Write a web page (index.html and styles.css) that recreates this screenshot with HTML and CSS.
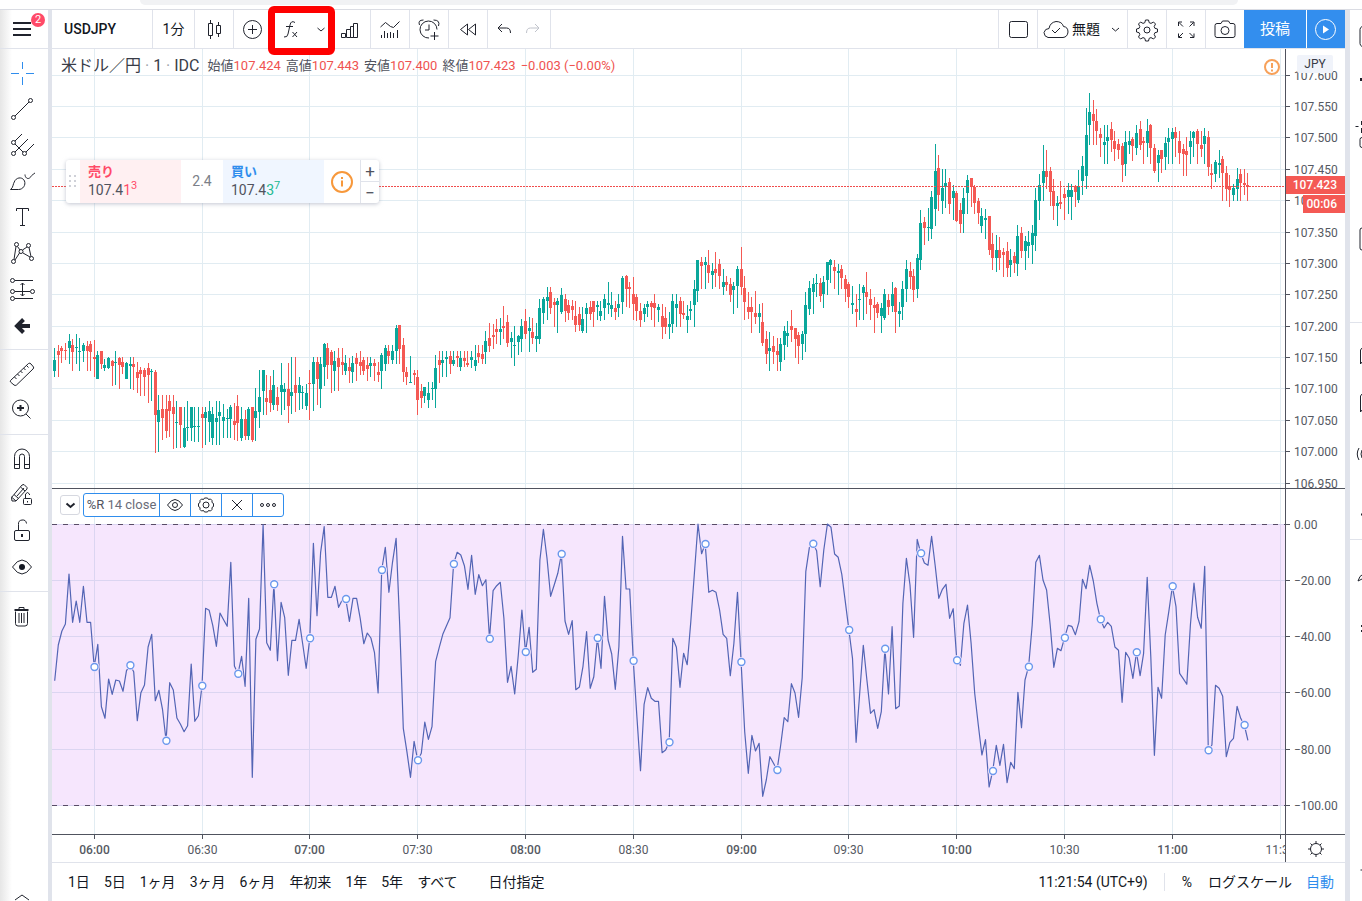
FILE: index.html
```html
<!DOCTYPE html>
<html lang="ja">
<head>
<meta charset="utf-8">
<title>USDJPY</title>
<link rel="stylesheet" href="styles.css">
</head>
<body>
<div class="address-strip"><div class="address-bar"></div></div>
<div class="app">
  <aside class="tools">
    <button class="menu" aria-label="メニュー">
      <svg width="48" height="38"><path class="thick" d="M13 13h18M13 19h18M13 25h18"/></svg>
      <span class="badge">2</span>
    </button>
    <div class="tool-group">
      <button class="tool blue" aria-label="十字"><svg><path d="M14.500 3v7M14.500 18v8M3 14.500h8M18 14.500h8"/></svg></button>
      <button class="tool" aria-label="トレンドライン"><svg><circle cx="22.500" cy="5.500" r="2"/><circle cx="5.500" cy="22.500" r="2"/><path d="M7 21L21 7"/></svg></button>
      <button class="tool" aria-label="ピッチフォーク"><svg><circle cx="5.500" cy="11.500" r="2"/><circle cx="5.500" cy="22.500" r="2"/><circle cx="16.500" cy="22.500" r="2"/><path d="M7 10l7-7M7 21L20 8M18 21l8-8M7 13l8 8"/></svg></button>
      <button class="tool" aria-label="ブラシ"><svg><path d="M2.500 22.500c3-2 2-5 4.500-9 3-4 8-3 9.500.5 1.500 4-1.500 8.500-6 8.500zM17 7.500c0 3 2.500 5 4.500 3.500s3-4 5.500-5"/></svg></button>
      <button class="tool" aria-label="テキスト"><svg><path d="M8.500 8V5.500h12V8M14.500 5.500v17M12 22.500h5"/></svg></button>
      <button class="tool" aria-label="パターン"><svg><circle cx="8.500" cy="5.500" r="2"/><circle cx="20.500" cy="6.500" r="2"/><circle cx="13" cy="12.500" r="2"/><circle cx="5.500" cy="22.500" r="2"/><circle cx="23.500" cy="19.500" r="2"/><path d="M8 7.500l-2 13M9.500 7.500l2.500 3.500M14.500 11l4.500-3M11.500 14L7 21M15 14l7 4M21 8.500l2 9"/></svg></button>
      <button class="tool" aria-label="予測"><svg><circle cx="4.500" cy="5.500" r="2"/><circle cx="4.500" cy="16.500" r="2"/><circle cx="24.500" cy="16.500" r="2"/><circle cx="4.500" cy="23.500" r="2"/><path d="M7 5.500h18M7 16.500h15M7 23.500h18M14.500 8v13M12.500 10l2-2 2 2M12.500 19l2 2 2-2"/></svg></button>
      <button class="tool" aria-label="矢印"><svg><path class="arrow" d="M22 15H8M15.500 8.500L9 15l6.500 6.500"/></svg></button>
    </div>
    <div class="tool-group">
      <button class="tool" aria-label="計測"><svg><path d="M2.500 20.500L20.500 3.500Q22 2.500 23 4l2.500 3q.5 1-.5 2L8.500 25Q7 26 6 25l-3.500-3q-.5-1 0-1.500zM6.500 17l2 2M9.500 14l2 2M12.500 11l2 2M15.500 8l2 2M18.500 5.500l2 2"/></svg></button>
      <button class="tool" aria-label="ズーム"><svg><circle cx="12.500" cy="12" r="8"/><path d="M18 18l4.500 4.500"/><path class="thick" d="M12.500 9v6M9 12h7"/></svg></button>
    </div>
    <div class="tool-group">
      <button class="tool" aria-label="マグネット"><svg><path d="M6.500 23.500v-12a7.500 7.500 0 0 1 15 0v12h-5v-12a2.500 2.500 0 0 0-5 0v12zM6.500 19.500h5M16.500 19.500h5"/></svg></button>
      <button class="tool" aria-label="描画モード"><svg><path d="M3.500 16.500L14 4l2-.5 3 3v1.500L8 20H4zM3.500 16l4.500 4M6 13.500l4.500 4M12.500 6l4.500 4M9 15L16 7"/><rect x="15.500" y="17.500" width="8" height="6" rx="1"/><path d="M17.500 17v-4q2-3 4 0v1M19.500 20v1.500"/></svg></button>
      <button class="tool" aria-label="ロック"><svg><rect x="6.500" y="13.500" width="15" height="10" rx="1.500"/><path d="M10.500 13V7.500a4 4 0 0 1 8-1"/><path class="thick" d="M14 17v3"/></svg></button>
      <button class="tool" aria-label="表示"><svg><path d="M4.500 14q9.500-14 19 0-9.500 14-19 0z"/><circle class="solid" cx="14" cy="14" r="3"/></svg></button>
    </div>
    <div class="tool-group">
      <button class="tool" aria-label="削除"><svg><path d="M7.500 9.500v12q0 2.500 2.500 2.500h7q2.500 0 2.500-2.500v-12M11 11v10M13.500 11v10M16 11v10M11 7V5.500h5V7"/><path class="thick" d="M6.500 8h14"/></svg></button>
    </div>
    <button class="collapse" aria-label="折りたたむ"><svg width="48" height="8"><path d="M15 7l7-5 7 5"/></svg></button>
  </aside>

  <main class="center">
    <header class="topbar">
      <button class="cell symbol">USDJPY</button>
      <button class="cell interval">1分</button>
      <button class="cell icon" aria-label="ローソク足"><svg><path d="M8.500 8.500h4v12h-4zM10.500 5v3.500M10.500 20.500V24M16.500 10.500h4v8h-4zM18.500 7v3.500M18.500 18.500V22"/></svg></button>
      <div class="cell cluster">
        <button class="icon" aria-label="比較"><svg><circle cx="13.500" cy="14.500" r="9"/><path d="M13.500 10v9M9 14.500h9"/></svg></button>
        <button class="icon" aria-label="インジケーター"><svg><path d="M18 7.500q-4-2.500-5 2.500l-2 9q-.5 3.500-4 3M9 11.500h7M15.500 17l4.500 5M20 17l-4.500 5"/></svg></button>
        <button class="caret" aria-label="お気に入り"><svg><path d="M11.500 13l3.500 3 3.500-3"/></svg></button>
        <button class="icon wide" aria-label="財務"><svg><path d="M5.500 18.500h4v4h-4zM10.500 14.500h4v8h-4zM14.500 11.500h3v11h-3zM17.500 8.500h4v14h-4z"/></svg></button>
        <span class="highlight"></span>
      </div>
      <button class="cell icon" aria-label="テンプレート"><svg><path d="M4.500 12l5-4.500 5 4 3 1 6-6M5.500 20v3M8.500 16v7M11.500 18v5M14.500 17v6M17.500 18v5M21.500 15v8"/></svg></button>
      <button class="cell icon" aria-label="アラート"><svg><path d="M22 14.500a8.500 8.500 0 1 0-8 8.500M14 9.500v5.500h-4M4.500 10q-2-5 4-5M18.500 5q7 0 5 6M19.500 17v8M15.500 21h8"/></svg></button>
      <button class="cell icon" aria-label="リプレイ"><svg><path d="M13.500 9v11L6.500 14.500zM21.500 9v11l-7-5.500z"/></svg></button>
      <div class="cell pair">
        <button class="icon small" aria-label="元に戻す"><svg><path d="M11 9l-4 4 4 4M7.500 13h8q4 0 4 5"/></svg></button>
        <button class="icon small faded" aria-label="やり直す"><svg><path d="M16 9l4 4-4 4M19.500 13h-8q-4 0-4 5"/></svg></button>
      </div>
      <span class="spacer"></span>
      <button class="cell icon" aria-label="レイアウト"><svg><rect x="5.500" y="6.500" width="18" height="16" rx="2"/></svg></button>
      <button class="cell layout-name">
        <svg><path d="M6 22.500q-4-1-4-5 1-4 5-4 1-6 7-7 6 0 7.500 5 4.500.5 4.500 5.500-.5 5-5 5.500zM10 15l3 3 5-5"/></svg>
        <span>無題</span>
        <svg class="mini"><path d="M3 8l3.500 3L10 8"/></svg>
      </button>
      <button class="cell icon" aria-label="設定"><svg><path d="M12.500 5h3l.7 2.700 1.800.7 2.500-1.400 2 2-1.300 2.500.7 1.800 2.600.7v3l-2.600.7-.7 1.800 1.300 2.500-2 2-2.500-1.400-1.800.7-.7 2.700h-3l-.7-2.700-1.800-.7L7.500 24l-2-2L6.800 19.500l-.7-1.800-2.600-.7v-3l2.600-.7.7-1.800L5.500 9l2-2L10 8.400l1.800-.7z"/><circle cx="14" cy="15" r="3"/></svg></button>
      <button class="cell icon" aria-label="全画面"><svg><path d="M6.500 11V7H10M7 7.500l4 4M18 7h4v4M21.500 7.500l-4 4M6.500 18.500v4H10M7 22l4-4M18 22.500h4v-4M21.500 22l-4-4"/></svg></button>
      <button class="cell icon snapshot" aria-label="スナップショット"><svg><path d="M6 8.500h4l1.500-2.500h6L19 8.500h3q2 0 2 2v10q0 2-2 2H6q-2 0-2-2v-10q0-2 2-2z"/><circle cx="14" cy="15.500" r="4"/></svg></button>
      <button class="publish">投稿</button>
      <button class="play" aria-label="再生"><svg><circle cx="13.500" cy="14.500" r="10"/><path class="solid" d="M11 10.500l6 4-6 4z"/></svg></button>
    </header>

    <section class="charts">
      <div class="pane price-pane">
        <svg class="plot" id="price-plot"></svg>
        <div class="legend">
          <span class="legend-name">米ドル／円 <i>·</i> 1 <i>·</i> IDC</span>
          <span>始値<b>107.424</b></span><span>高値<b>107.443</b></span><span>安値<b>107.400</b></span><span>終値<b>107.423</b></span><b>−0.003 (−0.00%)</b>
        </div>
        <div class="trade">
          <span class="grip"><svg width="8" height="14"><path d="M0 1h2M5 1h2M0 6h2M5 6h2M0 11h2M5 11h2"/></svg></span>
          <button class="side sell"><strong>売り</strong><span>107.4<em>1<sup>3</sup></em></span></button>
          <span class="spread">2.4</span>
          <button class="side buy"><strong>買い</strong><span>107.4<em>3<sup>7</sup></em></span></button>
          <button class="info" aria-label="情報"><svg width="24" height="24"><circle cx="12" cy="12" r="10"/><path class="thick" d="M12 10.500v6M12 7v2"/></svg></button>
          <span class="steps"><button>+</button><button>−</button></span>
        </div>
        <svg class="warning" width="18" height="18"><circle cx="9" cy="9" r="7"/><path d="M9 5v5M9 11.500v2"/></svg>
      </div>
      <div class="axis">
        <svg class="plot" id="price-axis"></svg>
        <span class="currency">JPY</span>
        <span class="price-tag">107.423</span>
        <span class="time-tag">00:06</span>
      </div>
      <div class="pane wr-pane">
        <svg class="plot" id="wr-plot"></svg>
        <div class="study">
          <button class="fold" aria-label="たたむ"><svg width="18" height="18"><path class="thick" d="M5.500 7.500l4 3.500 4-3.500"/></svg></button>
          <div class="study-bar">
            <span class="study-name"><b>%R</b> 14 close</span>
            <button aria-label="表示"><svg><path d="M6.500 14q7.500-11 15 0-7.500 11-15 0z"/><circle cx="14" cy="14" r="2.500"/></svg></button>
            <button aria-label="設定"><svg><path d="M12.500 7h3l1 1.500 2-.5 1.500 1.500v2l1.500 1v3l-1.500 1v2L18.500 20l-2-.5-1 1.500h-3l-1-1.500-2 .5L8 18.500v-2l-1.500-1v-3l1.500-1v-2L9.500 8l2 .5z"/><circle cx="14" cy="14" r="3"/></svg></button>
            <button aria-label="削除"><svg><path d="M9 9l10 10M19 9L9 19"/></svg></button>
            <button aria-label="その他"><svg><circle cx="8" cy="14" r="1.500"/><circle cx="14" cy="14" r="1.500"/><circle cx="20" cy="14" r="1.500"/></svg></button>
          </div>
        </div>
      </div>
      <div class="axis wr-axis"><svg class="plot" id="wr-axis"></svg></div>
      <div class="time-axis"><svg class="plot" id="time-axis"></svg></div>
      <button class="corner" aria-label="軸の設定"><svg><circle cx="14" cy="14" r="5.500"/><path d="M14 8.500V6M14 19.500V22M8.500 14H6M19.500 14H22M10 10L8.500 8.500M18 10l1.500-1.500M10 18l-1.500 1.500M18 18l1.500 1.500"/></svg></button>
    </section>

    <footer class="bottombar">
      <button>1日</button><button>5日</button><button>1ヶ月</button><button>3ヶ月</button><button>6ヶ月</button><button>年初来</button><button>1年</button><button>5年</button><button>すべて</button>
      <button class="goto">日付指定</button>
      <span class="spacer"></span>
      <button class="clock">11:21:54 (UTC+9)</button>
      <button class="percent">%</button>
      <button>ログスケール</button>
      <button class="auto">自動</button>
    </footer>
  </main>

  <aside class="widgets">
    <svg width="12" height="891"><path d="M12 16.500q-2 1-2 3v14q0 2 2 3M12 127.500q-2 0-2 2v6q0 2 2 2M5.500 116.500h3M11.500 111v4M11.500 118v5M12 218q-2 0-2 2v18q0 2 2 2M12 338l-1.500 2v14l1.500-2M12 384l-1.500 2v16l1.500-2M9 438q-3.500 6 0 12M12 440q-2 4 0 8M12 565q-2 0-4 6l4-2M10.500 860h2"/><path class="thick" d="M11 504.500h1M11 68v3M11 616h1M11 621h1"/></svg>
    <span class="rule first"></span>
    <span class="rule second"></span>
  </aside>
</div>
<script src="chart.js"></script>
</body>
</html>
```
FILE: styles.css
```css
* { box-sizing: border-box; }
html, body { height: 100%; margin: 0; }
body {
  display: flex;
  flex-direction: column;
  overflow: hidden;
  background: #fff;
  color: #131722;
  font: 14px/18px Roboto, "Noto Sans CJK JP", sans-serif;
}
button {
  margin: 0;
  padding: 0;
  border: 0;
  background: none;
  color: inherit;
  font: inherit;
  white-space: nowrap;
}
svg { display: block; flex: none; fill: none; stroke: #20232d; stroke-width: 1; }
.thick { stroke-width: 2; }
.solid { fill: currentColor; stroke: none; }
.spacer { flex: 1; }

.address-strip { height: 10px; flex: none; padding: 0 124px 0 140px; border-bottom: 1px solid #dadce3; }
.address-bar { height: 5px; border-radius: 0 0 8px 8px; background: #f1f2f4; }

.app { display: flex; flex: 1; min-height: 0; }

/* Drawing tools */
.tools {
  display: flex;
  flex-direction: column;
  width: 52px;
  border-right: 4px solid #e0e3eb;
  background: linear-gradient(90deg, #e6e6e6, #fff 12px);
}
.menu { position: relative; height: 39px; border-bottom: 1px solid #e0e3eb; }
.badge {
  position: absolute;
  top: 3px;
  left: 31px;
  width: 14px;
  height: 14px;
  border-radius: 50%;
  background: #ff4a68;
  color: #fff;
  font-size: 11px;
  line-height: 14px;
}
.tool-group { padding: 6px 0; border-bottom: 1px solid #e0e3eb; }
.tool-group:nth-of-type(4) { border-bottom: 0; }
.tool { display: flex; align-items: center; width: 44px; height: 36px; justify-content: center; }
.tool svg, .topbar svg, .study-bar svg, .corner svg { width: 28px; height: 28px; }
.tool.blue svg { stroke: #2f8ded; }
.arrow { stroke-width: 4; }
.collapse { margin-top: auto; }

.center { display: flex; flex: 1; flex-direction: column; min-width: 0; }

/* Top toolbar */
.topbar { display: flex; flex: none; height: 39px; border-bottom: 1px solid #e0e3eb; }
.cell { display: flex; align-items: center; justify-content: center; border-right: 1px solid #e0e3eb; }
.symbol { width: 101px; padding-left: 12px; justify-content: flex-start; font-weight: 500; }
.interval { width: 42px; }
.icon { display: flex; width: 39px; align-items: center; justify-content: center; }
.spacer + .cell { width: 40px; border-left: 1px solid #e0e3eb; }
.cluster { position: relative; width: 137px; align-items: stretch; }
.cluster .icon { width: 38px; }
.cluster .icon.wide { width: 41px; }
.caret { display: flex; width: 19px; align-items: center; justify-content: center; }
.highlight {
  position: absolute;
  top: -4px;
  left: 34px;
  width: 67px;
  height: 49px;
  border: 7px solid #fe0000;
  border-radius: 6px;
  z-index: 2;
}
.pair { width: 63px; }
.icon.small { width: 28px; }
.faded svg { stroke: #c0c3cb; }
.layout-name { width: 90px; gap: 2px; }
.layout-name .mini { width: 14px; height: 18px; margin-left: 7px; }
.cell.snapshot { width: 38px; border-right: 0; }
.publish { width: 62px; background: #338eee; color: #fff; font-size: 15px; }
.play { display: flex; width: 39px; align-items: center; justify-content: center; border-left: 1px solid #fff; background: #338eee; color: #fff; }
.play svg { stroke: #fff; }

/* Charts */
.charts {
  display: grid;
  flex: 1;
  grid-template-columns: minmax(0, 1fr) 60px;
  grid-template-rows: minmax(0, 439fr) minmax(0, 346fr) 28px;
  min-height: 0;
}
.pane, .axis, .time-axis { position: relative; overflow: hidden; }
.axis, .corner { border-left: 1px solid #50535e; }
.wr-pane, .wr-axis, .time-axis, .corner { border-top: 1px solid #50535e; }
.plot { width: 100%; height: 100%; font-size: 12px; }
.plot text { fill: #555962; stroke: none; }
.plot .hour { font-weight: 500; }
.grid { stroke: #e1ecf2; }
.tick { stroke: #50535e; }
.up { stroke: #0aa79b; }
.down { stroke: #f45954; }
.wick { shape-rendering: crispEdges; }
.body { stroke-width: 3; shape-rendering: crispEdges; }
.last-price { stroke: #f04c4c; stroke-dasharray: 2 1; }
.band { fill: #a505eb; fill-opacity: .1; stroke: none; }
.bound { stroke: #584c66; stroke-dasharray: 5 6; }
.wr-line { stroke: #5365b5; stroke-width: 1.2; stroke-linejoin: round; }
.halo { fill: #f6e6fd; stroke: none; }
.mark { fill: #fff; stroke: #6a98ed; stroke-width: 1.4; }

.legend {
  position: absolute;
  top: 7px;
  left: 9px;
  display: flex;
  align-items: center;
  gap: 5px;
  color: #50535e;
  font-size: 13px;
  line-height: 20px;
  white-space: nowrap;
}
.legend b { color: #ef5350; font-weight: 400; }
.legend i { color: #a0a3ab; font-style: normal; }
.legend-name { margin-right: 3px; color: #383c47; font-size: 16px; }

.trade {
  position: absolute;
  top: 111px;
  left: 14px;
  display: flex;
  height: 43px;
  border-radius: 3px;
  background: #fff;
  box-shadow: 0 1px 4px #9aa0b399;
  color: #50535e;
}
.grip { display: flex; width: 14px; align-items: center; justify-content: center; }
.grip svg { stroke: #cfd1d8; stroke-width: 2; }
.side { display: flex; flex-direction: column; width: 101px; padding: 3px 8px; text-align: left; line-height: 18px; }
.side strong { font-size: 13px; }
.side span { line-height: 19px; }
.side em { font-style: normal; }
.side sup { font-size: 11px; line-height: 0; }
.sell { background: #fff0f2; }
.sell strong, .sell em { color: #ff4a68; }
.buy { background: #f0f6ff; }
.buy strong { color: #2f8ded; }
.buy em { color: #22b992; }
.spread { width: 42px; color: #7b7f88; line-height: 43px; text-align: center; }
.info { width: 36px; padding-left: 6px; }
.info svg { stroke: #f7983b; stroke-width: 2; }
.steps { display: flex; flex-direction: column; width: 19px; border-left: 1px solid #e0e3eb; }
.steps button { flex: 1; font-size: 17px; line-height: 20px; }
.steps button + button { border-top: 1px solid #e0e3eb; }
.warning { position: absolute; top: 9px; right: 4px; stroke: #f7a15a; stroke-width: 2; }

.currency {
  position: absolute;
  top: 6px;
  left: 11px;
  width: 36px;
  border-radius: 2px;
  background: #f0f3fa;
  color: #383c47;
  font-size: 12px;
  text-align: center;
}
.price-tag, .time-tag {
  position: absolute;
  right: 0;
  padding-right: 8px;
  background: #f45954;
  color: #fff;
  font-size: 12px;
  font-weight: 500;
  line-height: 18px;
  text-align: right;
}
.price-tag { top: 127px; left: -1px; }
.time-tag { top: 146px; left: 17px; }

.study { position: absolute; top: 4px; left: 8px; display: flex; align-items: center; gap: 3px; }
.fold { border: 1px solid #d6d8e0; border-radius: 3px; background: #fff; }
.study-bar { display: flex; height: 24px; border: 1px solid #2f8ded; border-radius: 3px; background: #fff; color: #6a6d78; }
.study-name { width: 75px; font-size: 13px; line-height: 22px; text-align: center; white-space: nowrap; }
.study-name b { color: #50535e; font-weight: 400; }
.study-bar button { display: flex; width: 31px; align-items: center; justify-content: center; border-left: 1px solid #2f8ded; overflow: hidden; }
.corner { display: flex; align-items: center; justify-content: center; }

/* Bottom bar */
.bottombar { display: flex; flex: none; align-items: center; gap: 14px; height: 39px; padding: 0 11px 0 16px; border-top: 1px solid #e0e3eb; }
.goto { margin-left: 17px; }
.percent { margin-left: 2px; padding: 0 2px 0 17px; border-left: 1px solid #e0e3eb; }
.auto { color: #2f8ded; }

/* Right widget strip */
.widgets { position: relative; width: 17px; border-left: 5px solid #e0e3eb; overflow: hidden; }
.rule { position: absolute; left: 0; width: 12px; height: 1px; background: #e0e3eb; }
.rule.first { top: 312px; }
.rule.second { top: 529px; }
```
FILE: chart.js
```js
// Chart geometry: minute 0 is 06:00, one bar per minute.
const X0 = 42.2;
const STEP = 3.594;
const barX = (minute) => X0 + minute * STEP;
const NS = 'http://www.w3.org/2000/svg';

function add(parent, tag, attrs, text) {
  const node = document.createElementNS(NS, tag);
  for (const key in attrs) node.setAttribute(key, attrs[key]);
  if (text) node.textContent = text;
  parent.appendChild(node);
  return node;
}
const line = (parent, cls, x1, y1, x2, y2) => add(parent, 'line', { class: cls, x1, y1, x2, y2 });

// Runs of candles: first minute, top offset, then colour with high, top, bottom, low in thirds of a pixel.
const runs = [
  [-11, 161, `g414 450 483 500,r405 423 434 500,r408 414 423 459,r399 420 423 450,g372 393 414 461,r387 405 426 483,g372 410 413 461,g384 423 425 483,g399 405 423 456,r393 408 423 483,r393 402 426 483,
r390 441 446 500,g423 435 507 507,r423 423 461 476,g447 465 474 483,g441 443 474 476,r450 453 467 528,g423 456 459 524,r441 444 465 537,r441 456 470 492,g456 458 507 507,g441 462 467 537,r441 462 471 540,r456 485 504 549,r470 480 493 557,r473 480 502 558,r460 474 494 578,g476 484 487 573,r480 486 615 728,g555 600 636 725,r555 597 624 690,r555 597 663 684,r555 573 604 682,r555 591 612 716,g573 635 638 714,r591 591 645 714,g591 654 711 714,g573 651 654 693,g591 591 654 693,g591 648 651 696,g591 648 651 696,
r591 612 624 714,g591 606 624 705,g573 603 637 696,g591 612 684 705,g573 624 636 705,g573 606 618 705,g582 621 633 684,g597 624 627 684,g585 591 627 684,r579 633 645 690,r555 588 640 693,g591 627 684 693,r600 627 678 690,g591 597 678 690,r591 591 690 696,g534 603 624 693,g480 561 606 654,g480 480 543 615,r494 564 576 615,r497 540 579 606,g480 525 585 600,r531 560 585 603,g459 525 546 615,g519 538 546 600,r459 537 588 639,g441 546 558 612,r441 525 549 606,g500 525 548 600,g527 546 548 598,g522 548 588 600`],
  [60, 181, `r420 459 462 570,g381 396 462 543,r381 396 447 525,g381 402 477 534,g339 342 411 468,r339 354 405 447,r360 366 405 489,g363 393 423 483,r354 384 411 483,r354 396 405 435,g375 399 423 435,r384 411 423 459,g378 399 426 459,r369 384 402 453,r363 396 408 435,r381 390 423 435,r381 405 417 453,g381 399 408 441,r387 399 408 453,r396 426 435 456,g369 375 423 477,g345 354 402 423,r345 363 378 402,g345 363 390 402,g285 294 363 402,r285 285 357 402,r324 345 426 456,r411 426 441 465,g378 456 459 459,r420 429 435 465,
r420 441 510 555,r462 483 504 534,g471 471 498 519,g456 489 510 534,g456 474 477 510,g375 414 477 534,r363 390 405 459,g363 390 399 441,g363 381 387 441,r363 378 402 432,g363 390 402 408,r363 378 384 411,g363 384 411 423,r363 384 393 411,r363 399 405 411,g363 381 390 414,g345 390 408 423,r345 369 381 399,r345 372 387 402,g303 333 366 402,r279 324 348 366,r282 315 321 357,r267 297 306 342,g264 297 306 345,r228 288 294 327,r255 276 339 351,g306 324 336 384,g288 345 348 408,g315 318 336 375,g267 288 327 366,
r237 273 312 327,g261 294 303 366,r264 306 324 342,g279 318 327 366,g207 234 327 342,g201 207 249 282,g171 201 213 270,r171 186 234 252,r204 216 225 291,g204 213 225 309,g174 195 246 252,r192 207 243 276,r210 225 249 270,r210 228 240 270,r213 258 285 306,r231 252 285 303,g231 267 303 309,g219 234 252 309,r213 231 252 270,r213 213 246 291,g213 225 231 270,g213 243 258 273,g192 207 234 270,g156 219 225 252,g186 225 237 261,r213 234 246 270,g192 222 234 261,g138 144 216 252,r135 138 177 231,r156 171 177 234,
r141 192 222 270,r192 201 243 273,r219 243 270 291,g222 234 252 276,g213 222 231 261,r213 219 231 270,r192 219 234 291,g222 231 240 276,r222 258 291 327,r231 264 291 312,g246 282 291 327,g192 213 282 309,g192 222 234 291,r201 213 252 291,r213 249 255 267,g225 258 270 309,g213 237 243 270,g150 177 225 291,g90 90 183 216`],
  [169, 81, `r381 396 408 477,g381 396 405 477,r360 405 429 459,g399 423 435 477,r366 417 429 471,r387 402 438 477,g417 456 471 495,r438 456 465 483,r444 462 495 516,g456 468 480 552,g408 417 468 534,
r351 417 471 495,r438 474 516 570,r486 531 546 567,r501 531 546 609,r483 549 561 582,g522 549 561 609,r519 576 639 648,r603 627 672 702,g606 654 663 723,r618 648 666 702,r624 663 675 723,g624 642 696 723,g588 603 645 690,g573 609 618 651,r540 588 600 636,r594 594 627 684,r606 615 648 702,g603 612 642 690,g486 525 612 666,g453 474 537 555,g444 462 486 552,g432 459 462 501,r444 459 498 516,g438 456 492 534,g396 396 450 495,g387 390 405 459,r390 411 423 477,g402 423 429 495,r405 417 444 477,r435 447 477 516,
r456 462 501 534,g468 519 525 552,r492 537 546 591,g462 507 510 570,g465 471 489 570,r426 486 501 552,r477 507 525 570,r501 525 534 609,r516 522 549 564,g519 534 558 609,g477 492 564 570,r492 510 531 555,g456 492 528 546,r471 474 546 609,g516 543 552 591,g453 477 531 570,g390 417 477 516,r396 423 441 477,r417 438 480 516,g372 384 477 504,g240 279 390 420,r261 276 294 345,g234 291 294 333,g183 201 297 327,g42 123 237 288,r75 114 195 243,g117 174 213 252,g117 159 168 234,r144 156 222 252,g165 183 204 270,
r183 189 273 276,r219 240 282 309,g174 204 252 309,g135 150 189 252,r144 144 171 231,r165 171 219 252,r204 213 249 282,g234 258 288 309,g237 264 270 327,r258 258 360 375,r309 342 384 420,g315 360 384 426,r321 360 384 420,r354 366 375 441,r336 363 414 441,g357 390 405 441,r366 378 399 429,g285 318 402 438,r291 309 363 384,g318 333 363 420,g303 336 348 384,g285 309 345 402,g174 210 318 363,g132 165 213 270,g45 123 159 213,r60 123 141 177,r111 123 186 228,r147 183 228 270,g198 219 228 288,r153 216 222 237,r174 192 204 270`],
  [271, 31, `g309 330 351 402,g312 330 351 420,r315 318 336 381,g270 318 360 369,g228 258 303 345,g84 165 288 327,g39 96 135 195,r60 102 123 195,r87 123 153 195,r144 162 174 231,g135 186 195 252,g135 171 183 252,r126 147 180 216,r153 183 207 243,r177 192 210 237,r189 198 255 306,g153 186 252 288,g153 183 195 222,r171 177 198 243,g135 159 204 225,r123 147 195 210,r171 183 189 252,g117 153 189 231,r132 135 204 252,r192 204 273 279,g210 225 249 306,r210 210 237 279,g171 189 231 270,g144 174 186 252,
g144 156 177 252,r141 156 174 231,r153 183 219 252,r192 207 222 288,r171 213 225 288,g153 183 201 252,g153 156 174 231,r147 153 192 252,r153 195 207 231,g144 168 192 252,r153 171 261 288,r252 279 285 327,g240 246 282 306,g210 249 255 294,r228 237 279 363,r258 279 327 363,r285 318 330 381,g312 324 345 363,g264 297 327 363,r267 282 309 363,r267 309 315 345,r279 315 320 363`],
];

// Oscillator heights, one per minute from 05:49.
const wr = [680.7,645,631,624,574,622.3,601,622.3,586.3,622.3,622.3,
667,644.3,706.7,718.3,679,694.3,680,681,691.3,670.7,665.3,671.7,720.7,692.7,685,647,634.3,700.7,690.3,709.3,740.7,682.7,690,718,724.3,731.7,725.7,664,721.3,715.7,
685.7,608.3,610.3,625.7,646.3,613,619.7,626.3,562.3,666,673.7,656.3,686.3,598.3,777.3,639.3,629,524.5,642.7,650.3,584.3,660.7,602.3,617.7,675.3,640.3,640.3,619.3,644,668.3,
638.3,543.3,615.7,552.7,526.7,597.3,597.3,586.3,607.3,600,599,621.3,598.3,598.3,618.3,643.7,633,638,652.7,693,570,547.3,592.3,562.3,538.3,625,728.3,751.7,777.3,741.3,
760.3,753.3,722,739.3,726.7,661.7,647.7,634.3,626,617.7,564,552.3,555,565.7,589.3,555.3,594.3,574.7,585.7,579.7,638.7,590.7,585.7,582.3,618.3,682.3,666.3,694,655,610,
652,627.3,672.3,669.3,560,529.3,558.3,596.3,585,573.3,554,621,634.3,620.7,689.7,687,666.3,631.7,688.3,676.7,638,668.3,596.3,640,654,689.3,646.7,536.3,589,589,
660.7,716.7,770.7,704.3,687.7,698.3,701.3,701.3,752.7,750,742.3,638.3,647.3,687.3,653.3,664.7,621.7,573.3,524,553.7,544,592.3,590.3,592.3,610,634.3,638.3,675.7,643.3,592.3,
662,731.7,773.3,735.3,751,743.3,796.3,780,756.7,763.3,770,745,717.7,721.7,683.7,693,717.3,677.7,571.7,547.3,543.7,550.7,586.7,550,524,527.3,554,557.3,574.3,601.7,
630,658.3,742.3,693.3,645.3,680,713.3,709.7,728.3,711.7,648.7,694,626.7,708.7,706,603.3,558.3,585,637.3,539.3,553.3,563,565.3,536.3,565.7,598.3,589.3,584.3,618.3,608.7,
660.3,665.3,623.3,605,643.3,693.3,725,755,739.7,787,771,745.3,765.3,744.3,782.7,762.3,768.7,692.3,727.7,680,666.7,625,562.3,555.3,580,590,625,667.3,648.3,650.7,
637.7,625.3,626.3,634.7,621.7,579.3,588.7,565.3,581,603.3,619.3,628,622.3,626.3,647,650.3,702.3,652.3,658.3,678.3,652.3,675.7,653.3,577.3,656.7,755.3,687.3,698.3,635,611.7,
586.3,606.7,673.3,678.7,684.3,625,583,617.3,628.3,566.3,750.3,745,685.3,688.3,696.3,756.7,742.3,738.3,706.3,718.3,725,740.3].map((y) => y - 489);

const byId = (id) => document.getElementById(id);
const pricePlot = byId('price-plot');
const priceAxis = byId('price-axis');
const wrPlot = byId('wr-plot');
const wrAxis = byId('wr-axis');
const timeAxis = byId('time-axis');

// Vertical grid and time labels every half hour
for (let i = 0; i < 12; i++) {
  const x = Math.floor(barX(i * 30)) + 0.5;
  line(pricePlot, 'grid', x, 0, x, '100%');
  line(wrPlot, 'grid', x, 0, x, '100%');
  line(timeAxis, 'tick', x, 0, x, 4);
  const hour = String(6 + Math.floor(i / 2)).padStart(2, '0');
  add(timeAxis, 'text', { x, y: 19, 'text-anchor': 'middle', class: i % 2 ? '' : 'hour' }, hour + (i % 2 ? ':30' : ':00'));
}

// Price grid and labels
for (let i = 0; i < 14; i++) {
  const y = Math.floor(26.2 + i * 31.37) + 0.5;
  line(pricePlot, 'grid', 0, y, '100%', y);
  line(priceAxis, 'tick', 0, y, 4, y);
  add(priceAxis, 'text', { x: 8, y: y + 4 }, (107.6 - i * 0.05).toFixed(3));
}

for (const [first, top, rows] of runs) {
  rows.split(',').forEach((row, i) => {
    const entry = row.trim();
    const cls = entry[0] === 'g' ? 'up' : 'down';
    const [high, open, close, low] = entry.slice(1).split(' ').map((v) => Math.round(top + v / 3));
    const x = Math.floor(barX(first + i)) + 0.5;
    line(pricePlot, 'wick ' + cls, x, high, x, low);
    line(pricePlot, 'body ' + cls, x, open, x, Math.max(close, open + 1));
  });
}
line(pricePlot, 'last-price', 0, 137.5, '100%', 137.5);

// Oscillator band, bounds and labels
for (let i = 0; i < 6; i++) {
  const y = Math.floor(35.3 + i * 56.2) + 0.5;
  line(wrPlot, 'grid', 0, y, '100%', y);
  line(wrAxis, 'tick', 0, y, 4, y);
  add(wrAxis, 'text', { x: 8, y: y + 4 }, (i ? '−' : '') + (i * 20).toFixed(2));
}
add(wrPlot, 'rect', { class: 'band', x: 0, y: 35, width: '100%', height: 282 });
line(wrPlot, 'bound', 0, 35.5, '100%', 35.5);
line(wrPlot, 'bound', 0, 316.5, '100%', 316.5);
add(wrPlot, 'polyline', { class: 'wr-line', points: wr.map((y, i) => barX(i - 11).toFixed(1) + ',' + y.toFixed(1)).join(' ') });
for (let m = 0; m <= 320; m += 10) {
  const at = { cx: (barX(m) + 0.3).toFixed(1), cy: wr[m + 11].toFixed(1) };
  add(wrPlot, 'circle', { class: 'halo', r: 5, ...at });
  add(wrPlot, 'circle', { class: 'mark', r: 3.5, ...at });
}
```
